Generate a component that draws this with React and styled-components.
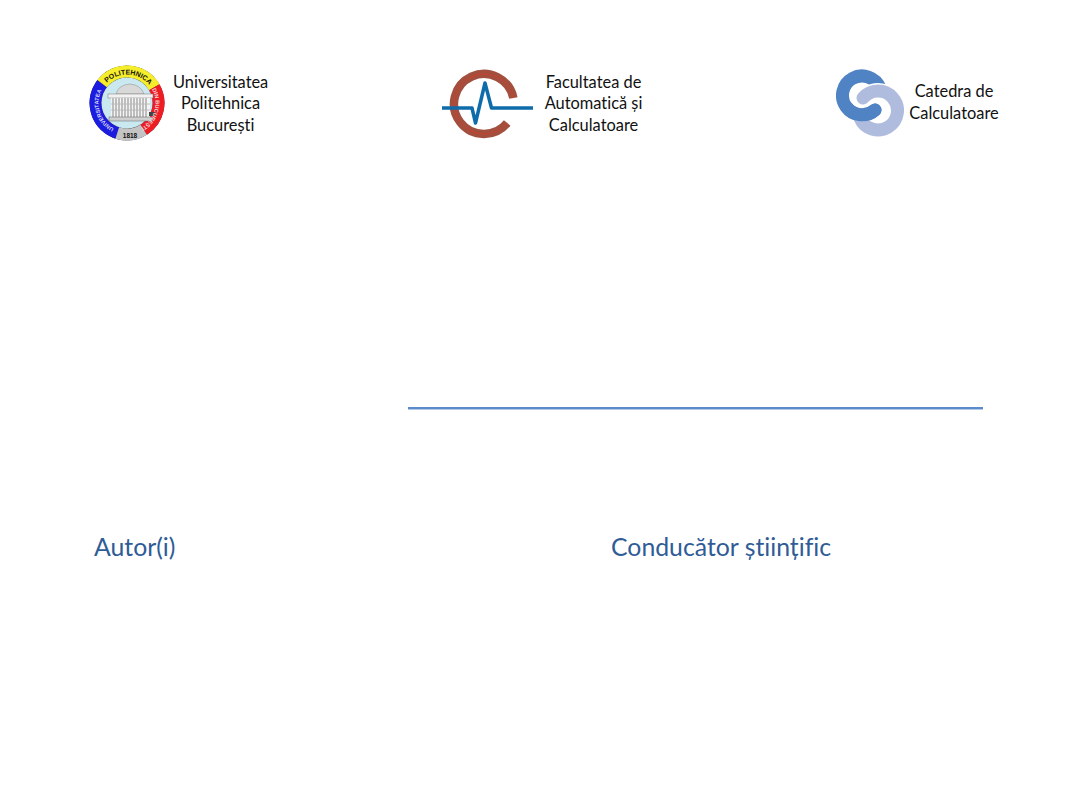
import styled, { createGlobalStyle } from "styled-components";

const GlobalStyle = createGlobalStyle`
  html, body {
    margin: 0;
    padding: 0;
    background: #fff;
  }
  body {
    font-family: Lato, "Liberation Sans", sans-serif;
    font-variant-ligatures: none;
  }
`;

const polar = (r, deg) => {
  const a = ((deg - 90) * Math.PI) / 180;
  return [38 + r * Math.cos(a), 38 + r * Math.sin(a)];
};

const arc = (r, from, to) => {
  const [x1, y1] = polar(r, from);
  const [x2, y2] = polar(r, to);
  return `M${x1} ${y1}A${r} ${r} 0 ${to - from > 180 ? 1 : 0} 1 ${x2} ${y2}`;
};

const UpbLogo = () => (
  <svg width="76" height="76" viewBox="0 0 76 76">
    <defs>
      <path id="upbTop" d={arc(28.5, -60, 66)} />
      <path id="upbRight" d={arc(28.5, 56, 156)} />
      <path id="upbLeft" d={arc(28.5, 192, 312)} />
    </defs>
    <circle cx="38" cy="38" r="37.5" fill="#3a3a3a" />
    <path d={arc(31.5, 198, 308)} fill="none" stroke="#1c1ce0" strokeWidth="12" />
    <path d={arc(31.5, 308, 420)} fill="none" stroke="#f7ee2b" strokeWidth="12" />
    <path d={arc(31.5, 60, 148)} fill="none" stroke="#ee1c25" strokeWidth="12" />
    <path d={arc(31.5, 148, 198)} fill="none" stroke="#c4c4c4" strokeWidth="12" />
    <circle cx="38" cy="38" r="25.5" fill="#c9e8ef" />
    <path d="M27 29Q29 20 41 19Q52 20 55 29Z" fill="#d8d8d8" stroke="#8a8a8a" strokeWidth=".5" />
    <rect x="19" y="29" width="45" height="4" fill="#f2f2f2" stroke="#777" strokeWidth=".5" />
    <rect x="22" y="33" width="39" height="19" fill="#f4f4f4" />
    <path
      d="M24 33V52M27 33V52M30 33V52M33 33V52M36 33V52M39 33V52M42 33V52M45 33V52M48 33V52M51 33V52M54 33V52M57 33V52"
      stroke="#9a9a9a"
      strokeWidth="1.200"
    />
    <path d="M22 39H61M22 45H61" stroke="#b5b5b5" strokeWidth=".8" />
    <rect x="20" y="52" width="43" height="4" fill="#cfcfcf" stroke="#666" strokeWidth=".5" />
    <rect x="60" y="47" width="6" height="4" fill="#444" />
    <LogoText fontSize="7" fill="#111">
      <textPath href="#upbTop" startOffset="50%" textAnchor="middle">POLITEHNICA</textPath>
    </LogoText>
    <LogoText fontSize="5.600" fill="#f3d9d9">
      <textPath href="#upbRight" startOffset="50%" textAnchor="middle">DIN BUCUREȘTI</textPath>
    </LogoText>
    <LogoText fontSize="5.600" fill="#d9d9f5">
      <textPath href="#upbLeft" startOffset="50%" textAnchor="middle">UNIVERSITATEA</textPath>
    </LogoText>
    <LogoText x="41" y="73" fontSize="6.500" fill="#111" textAnchor="middle">1818</LogoText>
  </svg>
);

const FacultyLogo = () => (
  <svg width="91" height="76" viewBox="0 0 91 76">
    <path d="M71.400 33A30 30 0 1 0 65.200 58" fill="none" stroke="#a34f3e" strokeWidth="8.500" />
    <path d="M71.400 33A30 30 0 1 0 65.200 58" fill="none" stroke="#d8392b" strokeWidth=".7" />
    <path
      d="M0 43H30L33.500 58L43 18L49.500 43H91"
      fill="none"
      stroke="#0f6cab"
      strokeWidth="3.500"
      strokeLinejoin="round"
    />
  </svg>
);

const DepartmentLogo = () => (
  <svg width="68" height="76" viewBox="0 0 68 76">
    <path d="M44 23A19.500 19.500 0 1 0 39 45" fill="none" stroke="#4f83c4" strokeWidth="13" strokeLinecap="round" />
    <path d="M27 33A19.500 19.500 0 0 1 61.500 45" fill="none" stroke="#fff" strokeWidth="16" />
    <path d="M27 33A19.500 19.500 0 1 1 24 53" fill="none" stroke="#afbcdd" strokeWidth="13" strokeLinecap="round" />
    <path d="M11 42.500A19.500 19.500 0 0 0 39 45" fill="none" stroke="#4f83c4" strokeWidth="13" strokeLinecap="round" />
  </svg>
);

const App = () => (
  <Page>
    <GlobalStyle />
    <Header>
      <Brand $gap={8}>
        <UpbLogo />
        <Caption $width={95}>Universitatea<br />Politehnica<br />București</Caption>
      </Brand>
      <Brand $gap={11}>
        <FacultyLogo />
        <Caption $width={99}>Facultatea de<br />Automatică și<br />Calculatoare</Caption>
      </Brand>
      <Brand $gap={5}>
        <DepartmentLogo />
        <Caption $width={90} $lineHeight={22.500} $lift={2}>Catedra de<br />Calculatoare</Caption>
      </Brand>
    </Header>
    <TitleRule />
    <People>
      <Label>Autor(i)</Label>
      <Label>Conducător științific</Label>
    </People>
  </Page>
);

export default App;

const Page = styled.main`
  width: 1066px;
  height: 799px;
  overflow: hidden;
  background: #fff;
`;

const Header = styled.header`
  display: grid;
  grid-template-columns: 353px 394px auto;
  align-items: center;
  height: 76px;
  padding: 65px 0 0 89px;
`;

const Brand = styled.div`
  display: flex;
  align-items: center;
  gap: ${(p) => p.$gap}px;

  svg {
    display: block;
    flex: none;
  }
`;

const Caption = styled.div`
  width: ${(p) => p.$width}px;
  padding-bottom: ${(p) => p.$lift || 0}px;
  font-size: 16.400px;
  line-height: ${(p) => p.$lineHeight || 21.500}px;
  text-align: center;
  white-space: nowrap;
  color: #111;
`;

const LogoText = styled.text`
  font-family: "Liberation Sans", sans-serif;
  font-weight: 700;
`;

const TitleRule = styled.hr`
  width: 575px;
  height: 2px;
  margin: 266px 0 0 408px;
  border: 0;
  border-bottom: 1px solid #b4cbe8;
  background: #5b8bcb;
`;

const People = styled.section`
  display: grid;
  grid-template-columns: 517px auto;
  padding: 120px 0 0 94px;
`;

const Label = styled.h2`
  margin: 0;
  font-size: 24.800px;
  line-height: 34px;
  font-weight: 400;
  color: #2f5c96;
`;
